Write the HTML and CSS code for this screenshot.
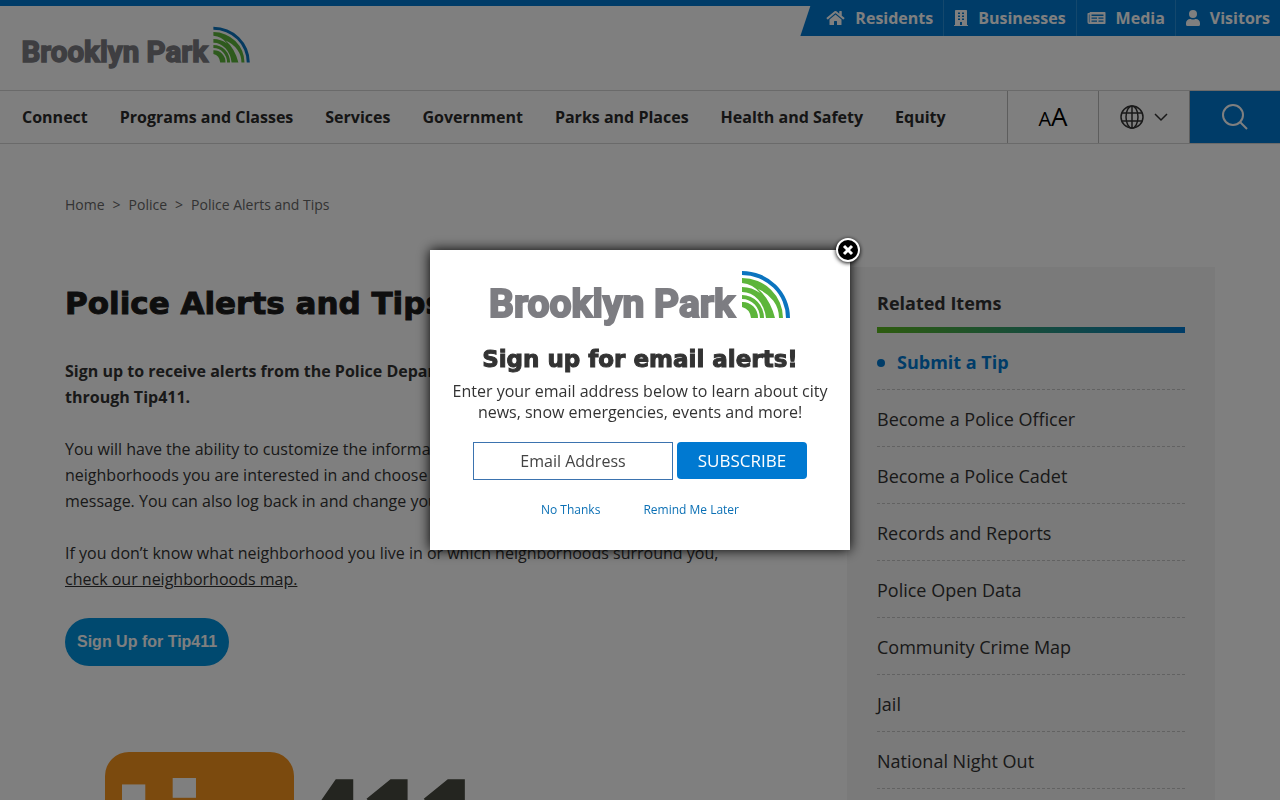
FILE: index.html
```html
<!DOCTYPE html>
<html lang="en">
<head>
    <meta charset="UTF-8">
    <meta name="viewport" content="width=device-width, initial-scale=1.0">
    <title>Police Alerts and Tips | Brooklyn Park</title>
    <link rel="stylesheet" href="styles.css">
</head>
<body>
    <!-- logo artwork shared by the header and the popup -->
    <svg class="defs" aria-hidden="true">
        <symbol id="logo" viewBox="0 0 300 58">
            <text class="logo-text" x="-1" y="47">Brooklyn Park</text>
            <path fill="#0b74bf" d="M252 1A48 47 0 0 1 300 48H296A44 43 0 0 0 252 5Z"/>
            <path fill="#5db53b" d="M252 8A41 40 0 0 1 293 48H289A37 32 0 0 0 268 19Q280 29 285 48H276A24 30 0 0 0 252 22V17Q262 17 270 23Q263 14 252 13Z"/>
            <path fill="#5db53b" d="M252 25A22 23 0 0 1 274 48H270A18 19 0 0 0 252 29Z"/>
            <path fill="#5db53b" d="M252 32A15 16 0 0 1 268 48H261Q260 39 252 37Z"/>
        </symbol>
    </svg>

    <header class="site-header">
        <div class="header-top">
            <a class="logo" href="#" aria-label="Brooklyn Park home"><svg><use href="#logo"/></svg></a>
            <nav class="audience-nav">
                <a href="#">
                    <svg width="19" height="16" viewBox="0 0 576 512"><path d="M280 148 96 300v164a16 16 0 0 0 16 16h112a16 16 0 0 0 16-16v-96a16 16 0 0 1 16-16h64a16 16 0 0 1 16 16v96a16 16 0 0 0 16 16h112a16 16 0 0 0 16-16V300L296 148a12 12 0 0 0-16 0zM571 251l-83-69V44a12 12 0 0 0-12-12h-56a12 12 0 0 0-12 12v72l-89-73a48 48 0 0 0-61 0L4 251a12 12 0 0 0-1 17l25 31a12 12 0 0 0 17 2L280 107a12 12 0 0 1 16 0l235 194a12 12 0 0 0 17-2l26-31a12 12 0 0 0-3-17z"/></svg>
                    Residents
                </a>
                <a href="#">
                    <svg width="14" height="16" viewBox="0 0 448 512"><path fill-rule="evenodd" d="M436 480h-20V24a24 24 0 0 0-24-24H56a24 24 0 0 0-24 24v456H12a12 12 0 0 0-12 12v20h448v-20a12 12 0 0 0-12-12zM128 76h64v52h-64zm0 96h64v52h-64zm0 96h64v52h-64zM256 76h64v52h-64zm0 96h64v52h-64zm0 96h64v52h-64zM192 384h64v96h-64z"/></svg>
                    Businesses
                </a>
                <a href="#">
                    <svg width="19" height="16" viewBox="0 0 576 512"><path fill-rule="evenodd" d="M552 64H88a24 24 0 0 0-24 24v8H24a24 24 0 0 0-24 24v272a56 56 0 0 0 56 56h496a24 24 0 0 0 24-24V88a24 24 0 0 0-24-24zM44 392V144h20v248a10 10 0 0 1-20 0zM128 144h384v44H128zM128 240h176v40H128zM128 332h176v40H128zM352 240h160v40H352zM352 332h160v40H352z"/></svg>
                    Media
                </a>
                <a href="#">
                    <svg width="14" height="16" viewBox="0 0 448 512"><path d="M224 256a128 128 0 1 0 0-256 128 128 0 0 0 0 256zm90 32h-17a174 174 0 0 1-146 0h-17A134 134 0 0 0 0 422v42a48 48 0 0 0 48 48h352a48 48 0 0 0 48-48v-42a134 134 0 0 0-134-134z"/></svg>
                    Visitors
                </a>
            </nav>
        </div>
        <div class="main-bar">
            <nav class="main-nav">
                <a href="#">Connect</a>
                <a href="#">Programs and Classes</a>
                <a href="#">Services</a>
                <a href="#">Government</a>
                <a href="#">Parks and Places</a>
                <a href="#">Health and Safety</a>
                <a href="#">Equity</a>
            </nav>
            <div class="tools">
                <button type="button" class="text-size" aria-label="Text size"><span>A</span>A</button>
                <button type="button" class="language" aria-label="Language">
                    <svg width="26" height="26" viewBox="0 0 26 26"><circle cx="12" cy="13" r="11"/><ellipse cx="12" cy="13" rx="6" ry="11"/><path d="M12 2v22M2 9h20M2 17h20"/></svg>
                    <svg width="14" height="9" viewBox="0 0 14 9"><path d="M1 1l6 6 6-6"/></svg>
                </button>
                <button type="button" class="search" aria-label="Search">
                    <svg width="28" height="28" viewBox="0 0 28 28"><circle cx="12" cy="12" r="10"/><path d="M19 19l7 7"/></svg>
                </button>
            </div>
        </div>
    </header>

    <div class="container">
        <nav class="breadcrumb">
            <a href="#">Home</a><span>&gt;</span><a href="#">Police</a><span>&gt;</span><a href="#">Police Alerts and Tips</a>
        </nav>
        <div class="columns">
            <main>
                <h1>Police Alerts and Tips</h1>
                <p><strong>Sign up to receive alerts from the Police Department and submit anonymous tips through Tip411.</strong></p>
                <p>You will have the ability to customize the information you receive, choose which neighborhoods you are interested in and choose how you would like to receive each message. You can also log back in and change your settings at any time.</p>
                <p>If you don’t know what neighborhood you live in or which neighborhoods surround you, <a href="#">check our neighborhoods map.</a></p>
                <a class="signup" href="#">Sign Up for Tip411</a>
                <svg class="tip-logo" width="380" height="170" viewBox="0 0 380 170" role="img" aria-label="tip411">
                    <rect width="189" height="150" rx="24" fill="#f7941d"/>
                    <text class="tip" x="8" y="112">tip</text>
                    <text x="200" y="97" fill="#484a40">411</text>
                </svg>
            </main>
            <aside class="related">
                <h2>Related Items</h2>
                <ul>
                    <li class="current"><a href="#">Submit a Tip</a></li>
                    <li><a href="#">Become a Police Officer</a></li>
                    <li><a href="#">Become a Police Cadet</a></li>
                    <li><a href="#">Records and Reports</a></li>
                    <li><a href="#">Police Open Data</a></li>
                    <li><a href="#">Community Crime Map</a></li>
                    <li><a href="#">Jail</a></li>
                    <li><a href="#">National Night Out</a></li>
                </ul>
            </aside>
        </div>
    </div>

    <div class="overlay">
        <div class="popup" role="dialog" aria-labelledby="popupTitle">
            <button type="button" class="close" aria-label="Close">
                <svg width="12" height="12" viewBox="0 0 12 12"><path d="M2 2l8 8M10 2l-8 8"/></svg>
            </button>
            <svg class="popup-logo" role="img" aria-label="Brooklyn Park"><use href="#logo"/></svg>
            <h2 id="popupTitle">Sign up for email alerts!</h2>
            <p>Enter your email address below to learn about city news, snow emergencies, events and more!</p>
            <form>
                <input type="email" placeholder="Email Address" aria-label="Email Address">
                <button type="submit">SUBSCRIBE</button>
            </form>
            <div class="popup-links">
                <a href="#">No Thanks</a>
                <a href="#">Remind Me Later</a>
            </div>
        </div>
    </div>
</body>
</html>
```

FILE: styles.css
```css
* { box-sizing: border-box; }
body {
    margin: 0;
    height: 100vh;
    overflow: hidden;
    background: #fff;
    color: #333;
    font-family: "Open Sans", sans-serif;
    font-size: 16px;
    line-height: 26px;
}
a { color: inherit; text-decoration: none; }
button { font-family: inherit; cursor: pointer; }
.defs { position: absolute; width: 0; height: 0; }
.logo-text {
    font-family: Roboto, sans-serif;
    font-size: 39px;
    font-weight: 700;
    fill: #7d7d82;
    stroke: #7d7d82;
    stroke-width: 2px;
}

/* header */
.site-header { border-top: 6px solid #0079d1; }
.header-top {
    display: flex;
    justify-content: space-between;
    align-items: flex-start;
    height: 84px;
}
.logo { padding: 20px 0 0 22px; }
.logo svg { display: block; width: 228px; height: 44px; }
.audience-nav {
    display: flex;
    height: 36px;
    margin-top: -6px;
    padding-left: 16px;
    background: #0079d1;
    clip-path: polygon(12px 0, 100% 0, 100% 100%, 0 100%);
    color: #fff;
    font-weight: 700;
}
.audience-nav a {
    display: flex;
    align-items: center;
    gap: 10px;
    padding: 0 10px;
}
.audience-nav a + a { border-left: 1px solid #2990db; }
.audience-nav svg { fill: #fff; }
.main-bar {
    display: flex;
    justify-content: space-between;
    height: 54px;
    border: solid #d4d4d4;
    border-width: 1px 0;
}
.main-nav {
    display: flex;
    align-items: center;
    gap: 32px;
    padding-left: 22px;
    color: #2b2b2b;
    font-weight: 700;
}
.tools { display: flex; }
.tools button {
    display: flex;
    align-items: center;
    justify-content: center;
    width: 91px;
    padding: 0;
    border: 0;
    border-left: 1px solid #bbb;
    background: #fff;
}
.tools svg { fill: none; stroke: #333; stroke-width: 1.5; }
.tools .text-size {
    align-items: baseline;
    padding-top: 7px;
    color: #000;
    font-size: 26px;
    font-weight: 500;
}
.text-size span { font-size: 20px; }
.tools .language { gap: 8px; }
.tools .search { background: #0079d1; }
.tools .search svg { stroke: #fff; stroke-width: 2; }

/* page */
.container {
    max-width: 1150px;
    margin: 0 auto;
    padding-top: 48px;
}
.breadcrumb {
    display: flex;
    gap: 8px;
    color: #666;
    font-size: 14px;
}
.columns {
    display: grid;
    grid-template-columns: 1fr 368px;
    gap: 112px;
    margin-top: 49px;
}
h1 {
    margin: 16px 0 35px;
    color: #1c1c1c;
    font-family: "DejaVu Sans", sans-serif;
    font-size: 31px;
    font-weight: 700;
    line-height: 40px;
    white-space: nowrap;
    -webkit-text-stroke: 1px;
}
main p { margin: 0 0 26px; }
main p a { text-decoration: underline; }
main strong { font-weight: 700; }
.signup {
    display: inline-block;
    padding: 11px 12px;
    border-radius: 24px;
    background: #0093df;
    color: #fff;
    font-family: "Liberation Sans", sans-serif;
    font-weight: bold;
}
.tip-logo {
    display: block;
    margin: 86px 0 0 40px;
    font-family: "Open Sans", sans-serif;
    font-size: 98px;
    font-weight: 800;
}
.tip-logo .tip {
    fill: #fff;
    stroke: #fff;
    stroke-width: 4px;
    font-family: "DejaVu Sans", sans-serif;
    font-size: 110px;
    font-weight: 700;
}
.related {
    padding: 23px 30px;
    background: #f4f4f4;
}
.related h2 {
    margin: 0;
    padding-bottom: 11px;
    border-bottom: 6px solid;
    border-image: linear-gradient(90deg, #5cb81e, #0079d1) 1;
    font-size: 18px;
    font-weight: 700;
}
.related ul {
    margin: 0;
    padding: 0;
    list-style: none;
}
.related li {
    height: 57px;
    border-bottom: 1px dashed #c4c4c4;
    font-size: 18px;
    line-height: 58px;
}
.related .current {
    color: #0079d1;
    font-weight: 700;
}
.current::before {
    content: "";
    display: inline-block;
    width: 8px;
    height: 8px;
    margin-right: 12px;
    border-radius: 50%;
    background: #0079d1;
    vertical-align: 2px;
}

/* email popup */
.overlay {
    position: fixed;
    inset: 0;
    display: flex;
    align-items: center;
    justify-content: center;
    background: rgba(0, 0, 0, 0.5);
}
.popup {
    position: relative;
    width: 420px;
    height: 300px;
    padding: 20px 20px 0;
    background: #fff;
    box-shadow: 0 0 12px #000;
    text-align: center;
}
.close {
    position: absolute;
    top: -12px;
    right: -10px;
    display: flex;
    align-items: center;
    justify-content: center;
    width: 24px;
    height: 24px;
    padding: 0;
    border: 2px solid #fff;
    border-radius: 50%;
    background: #000;
    box-shadow: 0 1px 4px #000;
}
.close svg { flex: none; stroke: #fff; stroke-width: 3; }
.popup-logo {
    display: block;
    width: 300px;
    height: 58px;
    margin: 0 auto 16px;
}
.popup h2 {
    margin: 0;
    font-family: "DejaVu Sans", sans-serif;
    font-size: 23px;
    font-weight: 700;
    line-height: 30px;
    -webkit-text-stroke: 1px;
}
.popup p {
    margin: 7px 0 19px;
    line-height: 21px;
}
.popup form {
    display: flex;
    justify-content: center;
    align-items: flex-start;
    gap: 4px;
}
.popup input {
    width: 200px;
    height: 38px;
    border: 1px solid #3b73af;
    color: #444;
    font: 16px "Open Sans", sans-serif;
    text-align: center;
}
.popup input::placeholder { color: #444; }
.popup form button {
    width: 130px;
    height: 37px;
    padding: 0;
    border: 0;
    border-radius: 4px;
    background: #0079d1;
    color: #fff;
    font-size: 17px;
    font-weight: 500;
}
.popup-links {
    display: flex;
    justify-content: center;
    gap: 43px;
    margin-top: 17px;
    color: #0b70b5;
    font-size: 12px;
}
```
